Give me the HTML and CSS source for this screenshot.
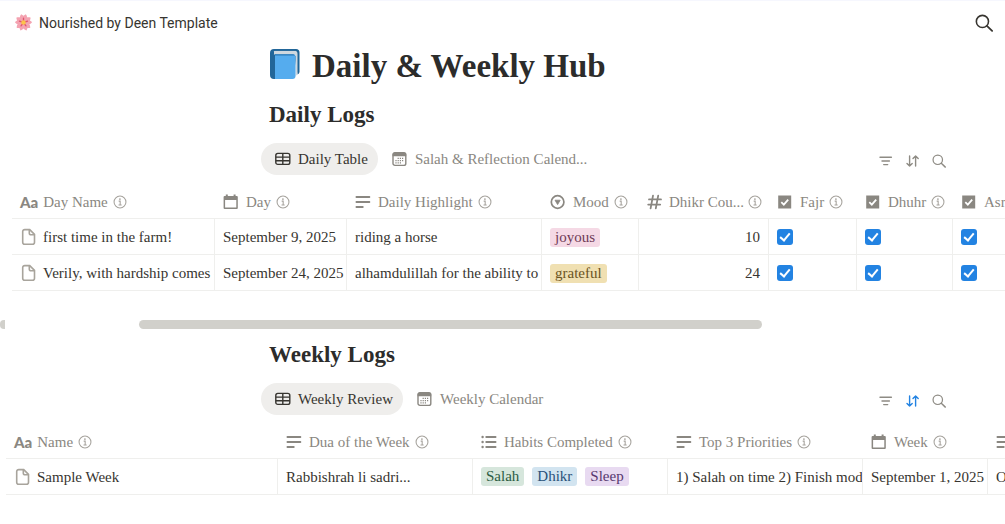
FILE: index.html
```html
<!DOCTYPE html>
<html lang="en">
<head>
  <meta charset="UTF-8">
  <meta name="viewport" content="width=device-width, initial-scale=1.0">
  <title>Daily &amp; Weekly Hub</title>
  <link rel="stylesheet" href="styles.css">
</head>
<body>
  <!-- Icon sprite -->
  <svg class="sprite" aria-hidden="true">
    <symbol id="search" viewBox="0 0 16 16">
      <circle cx="6.6" cy="6.6" r="5.4" fill="none" stroke="currentColor" stroke-width="1.4"/>
      <path d="M10.6 10.6l4.6 4.4" fill="none" stroke="currentColor" stroke-width="1.6" stroke-linecap="round"/>
    </symbol>
    <symbol id="filter" viewBox="0 0 16 16">
      <path d="M2 4.2h11.400M4 8h7.400M5.700 11.600h4" fill="none" stroke="currentColor" stroke-width="1.4" stroke-linecap="round"/>
    </symbol>
    <symbol id="sort" viewBox="0 0 16 16">
      <path d="M4.600 3v10M2 10.400L4.600 13l2.600-2.600M10.600 13V3M8 5.600L10.600 3l2.600 2.600" fill="none" stroke="currentColor" stroke-width="1.4" stroke-linecap="round" stroke-linejoin="round"/>
    </symbol>
    <symbol id="table" viewBox="0 0 16 16">
      <rect x=".8" y="2.4" width="14" height="11" rx="2" fill="none" stroke="currentColor" stroke-width="1.4"/>
      <path d="M.8 6.100h14M.8 9.700h14M7.800 2.400v11" fill="none" stroke="currentColor" stroke-width="1.4"/>
    </symbol>
    <symbol id="calendar" viewBox="0 0 16 16">
      <rect x="1" y="1.6" width="12.8" height="12.8" rx="2" fill="none" stroke="currentColor" stroke-width="1.4"/>
      <path d="M.6 3.400a2 2 0 0 1 2-2h9.600a2 2 0 0 1 2 2v1.800H.6z" fill="currentColor"/>
      <path d="M5.600 7.400h6M3.400 9.600h8.200M3.400 11.800h6" fill="none" stroke="currentColor" stroke-width="1.2" stroke-dasharray="1.2 1"/>
    </symbol>
    <symbol id="date" viewBox="0 0 16 16">
      <path d="M.6 3a1 1 0 0 1 1-1h1.200V.4h2V2h5.800V.4h2V2h1.200a1 1 0 0 1 1 1v11a1 1 0 0 1-1 1H1.600a1 1 0 0 1-1-1zm1.500 3v7.400h11.200V6z" fill="currentColor" fill-rule="evenodd"/>
    </symbol>
    <symbol id="text" viewBox="0 0 16 16">
      <path d="M1.4 3h13M1.4 8h13M1.4 13h6.4" fill="none" stroke="currentColor" stroke-width="1.8" stroke-linecap="round"/>
    </symbol>
    <symbol id="list" viewBox="0 0 16 16">
      <path d="M5.2 3h9.400M5.2 8h9.400M5.2 13h9.400" fill="none" stroke="currentColor" stroke-width="1.8" stroke-linecap="round"/>
      <circle cx="1.6" cy="3" r="1.2" fill="currentColor"/>
      <circle cx="1.6" cy="8" r="1.2" fill="currentColor"/>
      <circle cx="1.6" cy="13" r="1.2" fill="currentColor"/>
    </symbol>
    <symbol id="select" viewBox="0 0 16 16">
      <circle cx="7.600" cy="8" r="6.300" fill="none" stroke="currentColor" stroke-width="1.7"/>
      <path d="M5 6.200h5.200L7.600 10.600z" fill="currentColor" stroke="currentColor" stroke-width=".8" stroke-linejoin="round"/>
    </symbol>
    <symbol id="number" viewBox="0 0 16 16">
      <path d="M6 1.6L3.600 14.400M11.200 1.6L8.800 14.400M2 5.400h12M1.200 10.600h12" fill="none" stroke="currentColor" stroke-width="1.8" stroke-linecap="round"/>
    </symbol>
    <symbol id="check" viewBox="0 0 16 16">
      <path d="M1.200 1.500h13v13h-13z" fill="currentColor"/>
      <path d="M4.300 8.200l2.500 2.400 4.400-4.900" fill="none" stroke="#fff" stroke-width="1.800"/>
    </symbol>
    <symbol id="info" viewBox="0 0 16 16">
      <circle cx="8" cy="8" r="6.8" fill="none" stroke="currentColor" stroke-width="1.200"/>
      <path d="M6.500 7h1.700v4.200M6.300 11.400h3.600" fill="none" stroke="currentColor" stroke-width="1.200"/>
      <circle cx="7.900" cy="4.700" r="1" fill="currentColor"/>
    </symbol>
    <symbol id="page" viewBox="0 0 16 18">
      <path d="M4.200 1.600h5L14 6.400v7.800a2 2 0 0 1-2 2H4.200a2 2 0 0 1-2-2V3.600a2 2 0 0 1 2-2z" fill="none" stroke="currentColor" stroke-width="1.600"/>
      <path d="M8.800 1.800v3.400a1.600 1.600 0 0 0 1.600 1.600h3.400" fill="none" stroke="currentColor" stroke-width="1.600"/>
    </symbol>
    <symbol id="petal" viewBox="0 0 20 20">
      <path d="M10 10.500C6 8.500 5 4 7.600 1.200L10 2.800l2.400-1.600C15 4 14 8.500 10 10.500z"/>
    </symbol>
  </svg>

  <header class="topbar">
    <a class="crumb" href="#">
      <svg class="flower" viewBox="1 1 18 18" aria-hidden="true">
        <g fill="#f4a3b1">
          <path id="p" d="M10 10.500C6 8.500 5 4 7.600 1.200L10 2.800l2.400-1.600C15 4 14 8.500 10 10.500z"/>
          <use href="#p" transform="rotate(72 10 10)"/>
          <use href="#p" transform="rotate(144 10 10)"/>
          <use href="#p" transform="rotate(216 10 10)"/>
          <use href="#p" transform="rotate(288 10 10)"/>
        </g>
        <path d="M10 10V5.500M10 10l4.300-1.400M10 10l2.600 3.600M10 10l-2.600 3.600M10 10L5.700 8.600" stroke="#e0566f" stroke-width="1.400" stroke-linecap="round"/>
        <circle cx="10" cy="10" r="2.400" fill="#fbc34a"/>
      </svg>
      Nourished by Deen Template
    </a>
    <button class="icon-btn" aria-label="Search"><svg class="icon-lg"><use href="#search"/></svg></button>
  </header>

  <main>
    <h1>
      <svg class="book" viewBox="0 0 30 30" aria-hidden="true">
        <path d="M4 0h22a3.500 3.500 0 0 1 3.500 3.500V23a3 3 0 0 1-2 2.600L24 5H2.500z" fill="#1f6496"/>
        <path d="M4 1.800h20.500a3 3 0 0 1 3 3V25l-2 2.500V7L4 5.500z" fill="#cfd8df"/>
        <path d="M4 0a4 4 0 0 0-4 4v22a4 4 0 0 0 4 4h2V5.500H4.500C3 5.500 3 1.800 5 1.800h20V0z" fill="#226699"/>
        <path d="M5 5.200h18a2.500 2.500 0 0 1 2.500 2.500V27a3 3 0 0 1-3 3H5z" fill="#55acee"/>
        <path d="M5 5.200h18a2.500 2.500 0 0 1 2 1.200H5z" fill="#2b79b5"/>
      </svg>
      Daily &amp; Weekly Hub
    </h1>

    <section>
      <div class="section-head">
        <h2>Daily Logs</h2>
        <div class="view-bar">
          <div class="tabs" role="tablist">
            <button class="tab active" role="tab" aria-selected="true"><svg class="icon"><use href="#table"/></svg>Daily Table</button>
            <button class="tab" role="tab" aria-selected="false"><svg class="icon"><use href="#calendar"/></svg>Salah &amp; Reflection Calend...</button>
          </div>
          <div class="tools">
            <button class="icon-btn" aria-label="Filter"><svg class="icon"><use href="#filter"/></svg></button>
            <button class="icon-btn" aria-label="Sort"><svg class="icon"><use href="#sort"/></svg></button>
            <button class="icon-btn" aria-label="Search daily logs"><svg class="icon-sm"><use href="#search"/></svg></button>
          </div>
        </div>
      </div>

      <div class="table-wrap daily">
        <table>
          <colgroup>
            <col class="c-name"><col class="c-day"><col class="c-text"><col class="c-mood"><col class="c-count"><col class="c-fajr"><col class="c-dhuhr"><col class="c-asr">
          </colgroup>
          <thead>
            <tr>
              <th><div class="head"><span class="aa">Aa</span>Day Name<svg class="info"><use href="#info"/></svg></div></th>
              <th><div class="head"><svg class="icon"><use href="#date"/></svg>Day<svg class="info"><use href="#info"/></svg></div></th>
              <th><div class="head"><svg class="icon"><use href="#text"/></svg>Daily Highlight<svg class="info"><use href="#info"/></svg></div></th>
              <th><div class="head"><svg class="icon"><use href="#select"/></svg>Mood<svg class="info"><use href="#info"/></svg></div></th>
              <th><div class="head spread"><svg class="icon"><use href="#number"/></svg>Dhikr Cou...<svg class="info"><use href="#info"/></svg></div></th>
              <th><div class="head"><svg class="icon"><use href="#check"/></svg>Fajr<svg class="info"><use href="#info"/></svg></div></th>
              <th><div class="head"><svg class="icon"><use href="#check"/></svg>Dhuhr<svg class="info"><use href="#info"/></svg></div></th>
              <th><div class="head"><svg class="icon"><use href="#check"/></svg>Asr<svg class="info"><use href="#info"/></svg></div></th>
            </tr>
          </thead>
          <tbody>
            <tr>
              <td><a class="page" href="#"><svg class="page-icon"><use href="#page"/></svg>first time in the farm!</a></td>
              <td>September 9, 2025</td>
              <td>riding a horse</td>
              <td><span class="tag pink">joyous</span></td>
              <td class="num">10</td>
              <td><input type="checkbox" aria-label="Fajr" checked></td>
              <td><input type="checkbox" aria-label="Dhuhr" checked></td>
              <td><input type="checkbox" aria-label="Asr" checked></td>
            </tr>
            <tr>
              <td><a class="page" href="#"><svg class="page-icon"><use href="#page"/></svg>Verily, with hardship comes e</a></td>
              <td>September 24, 2025</td>
              <td>alhamdulillah for the ability to l</td>
              <td><span class="tag yellow">grateful</span></td>
              <td class="num">24</td>
              <td><input type="checkbox" aria-label="Fajr" checked></td>
              <td><input type="checkbox" aria-label="Dhuhr" checked></td>
              <td><input type="checkbox" aria-label="Asr" checked></td>
            </tr>
          </tbody>
        </table>
      </div>
      <div class="scrollbar">
        <span class="arrow"></span>
        <span class="thumb"></span>
      </div>
    </section>

    <section>
      <div class="section-head">
        <h2>Weekly Logs</h2>
        <div class="view-bar">
          <div class="tabs" role="tablist">
            <button class="tab active" role="tab" aria-selected="true"><svg class="icon"><use href="#table"/></svg>Weekly Review</button>
            <button class="tab" role="tab" aria-selected="false"><svg class="icon"><use href="#calendar"/></svg>Weekly Calendar</button>
          </div>
          <div class="tools">
            <button class="icon-btn" aria-label="Filter"><svg class="icon"><use href="#filter"/></svg></button>
            <button class="icon-btn on" aria-label="Sort"><svg class="icon"><use href="#sort"/></svg></button>
            <button class="icon-btn" aria-label="Search weekly logs"><svg class="icon-sm"><use href="#search"/></svg></button>
          </div>
        </div>
      </div>

      <div class="table-wrap weekly">
        <table>
          <colgroup>
            <col class="c-week-name"><col class="c-text"><col class="c-text"><col class="c-text"><col class="c-week"><col class="c-text">
          </colgroup>
          <thead>
            <tr>
              <th><div class="head"><span class="aa">Aa</span>Name<svg class="info"><use href="#info"/></svg></div></th>
              <th><div class="head"><svg class="icon"><use href="#text"/></svg>Dua of the Week<svg class="info"><use href="#info"/></svg></div></th>
              <th><div class="head"><svg class="icon"><use href="#list"/></svg>Habits Completed<svg class="info"><use href="#info"/></svg></div></th>
              <th><div class="head"><svg class="icon"><use href="#text"/></svg>Top 3 Priorities<svg class="info"><use href="#info"/></svg></div></th>
              <th><div class="head"><svg class="icon"><use href="#date"/></svg>Week<svg class="info"><use href="#info"/></svg></div></th>
              <th><div class="head"><svg class="icon"><use href="#text"/></svg></div></th>
            </tr>
          </thead>
          <tbody>
            <tr>
              <td><a class="page" href="#"><svg class="page-icon"><use href="#page"/></svg>Sample Week</a></td>
              <td>Rabbishrah li sadri...</td>
              <td><div class="tags"><span class="tag green">Salah</span><span class="tag blue">Dhikr</span><span class="tag purple">Sleep</span></div></td>
              <td>1) Salah on time 2) Finish modu</td>
              <td>September 1, 2025</td>
              <td>O</td>
            </tr>
          </tbody>
        </table>
      </div>
    </section>
  </main>
</body>
</html>
```

FILE: styles.css
```css
* {
  box-sizing: border-box;
}

body {
  margin: 0;
  background: #fff;
  color: #373530;
  font-family: "Liberation Serif", "Times New Roman", serif;
  font-size: 15px;
  line-height: 20px;
  overflow-x: hidden;
}

button {
  font: inherit;
  color: inherit;
  background: none;
  border: 0;
  padding: 0;
}

a {
  color: inherit;
  text-decoration: none;
}

svg {
  display: block;
  flex: none;
}

.sprite {
  position: absolute;
  width: 0;
  height: 0;
}

.icon {
  width: 16px;
  height: 16px;
}

.icon-sm {
  width: 14px;
  height: 14px;
}

.icon-lg {
  width: 18px;
  height: 18px;
}

.topbar {
  display: flex;
  align-items: center;
  justify-content: space-between;
  height: 44px;
  padding: 0 12px 0 15px;
  border-top: 1px solid #f6f7fe;
}

.crumb {
  display: flex;
  align-items: center;
  gap: 7px;
  font-family: Roboto, "Segoe UI", sans-serif;
  font-size: 14px;
}

.flower {
  width: 17px;
  height: 17px;
}

h1 {
  display: flex;
  align-items: center;
  gap: 12px;
  margin: 0 60px 13px 270px;
  font-size: 33px;
  line-height: 44px;
  color: #2c2c2b;
}

.book {
  width: 30px;
  height: 30px;
  margin-bottom: 4px;
}

h2 {
  margin: 0 0 14px 8px;
  font-size: 23px;
  line-height: 28px;
  color: #2c2c2b;
}

.section-head {
  margin: 0 59px 10px 261px;
}

.view-bar,
.tabs,
.tools {
  display: flex;
  align-items: center;
}

.view-bar {
  justify-content: space-between;
}

.tab {
  display: flex;
  align-items: center;
  gap: 7px;
  height: 32px;
  padding: 0 10px 0 14px;
  border-radius: 16px;
  color: #8a8781;
}

.tab.active {
  background: #efeeec;
  color: #373530;
}

.tools {
  gap: 11px;
  padding-top: 4px;
  color: #8e8b84;
}

.tools .on {
  color: #2383e2;
}

.table-wrap {
  overflow: hidden;
}

.daily {
  margin-left: 12px;
}

.weekly {
  margin-left: 6px;
}

table {
  table-layout: fixed;
  width: 0;
  border-collapse: separate;
  border-spacing: 0;
}

.c-name { width: 203px; }
.c-day { width: 132px; }
.c-text { width: 195px; }
.c-mood { width: 97px; }
.c-count { width: 130px; }
.c-fajr { width: 88px; }
.c-dhuhr { width: 96px; }
.c-asr { width: 96px; }
.c-week-name { width: 272px; }
.c-week { width: 125px; }

th,
td {
  padding: 0 0 0 8px;
  border-bottom: 1px solid #efefed;
  text-align: left;
  white-space: nowrap;
  overflow: hidden;
}

th {
  height: 34px;
  font-weight: normal;
  color: #8a8781;
}

td {
  height: 36px;
  border-right: 1px solid #efefed;
}

.head {
  display: flex;
  align-items: center;
  gap: 7px;
}

.head .info {
  width: 14px;
  height: 14px;
  margin-left: -2px;
  color: #a5a29c;
}

.spread {
  gap: 6px;
}

.aa {
  margin-right: -2px;
  font-family: Lato, sans-serif;
  font-weight: 900;
  font-size: 15px;
}

.page {
  display: flex;
  align-items: center;
  gap: 6px;
}

.page-icon {
  width: 17px;
  height: 18px;
  color: #a8a49c;
}

.num {
  padding-right: 8px;
  text-align: right;
}

.tags {
  display: flex;
  gap: 8px;
}

.tag {
  display: inline-block;
  padding: 0 5px;
  border-radius: 3px;
  line-height: 19px;
}

.pink { background: #f5d9e5; color: #6e3a55; }
.yellow { background: #f0e0b2; color: #6b5423; }
.green { background: #d6e6dc; color: #2c5c43; }
.blue { background: #d2e4f0; color: #29517a; }
.purple { background: #e8daf1; color: #57386f; }

input[type="checkbox"] {
  appearance: none;
  display: grid;
  place-items: center;
  width: 16px;
  height: 16px;
  margin: 0;
  border-radius: 3px;
  background: #2383e2;
}

input[type="checkbox"]::after {
  content: "";
  box-sizing: border-box;
  width: 6px;
  height: 10px;
  margin-bottom: 2px;
  border: solid #fff;
  border-width: 0 2px 2px 0;
  transform: rotate(40deg);
}

.scrollbar {
  display: flex;
  align-items: center;
  height: 9px;
  margin: 29px 0 12px;
}

.arrow {
  width: 5px;
  height: 9px;
  margin-right: 134px;
  background: #d1d0cb;
  border-radius: 4px 0 0 4px;
}

.thumb {
  width: 62%;
  height: 9px;
  background: #d1d0cb;
  border-radius: 5px;
}
```
